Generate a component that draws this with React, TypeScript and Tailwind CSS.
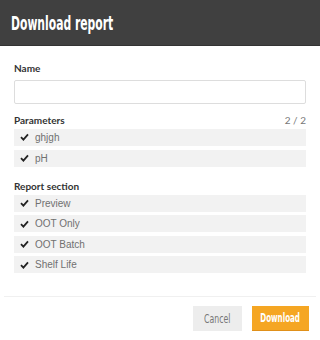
import { useState } from "react";

const parameters = ["ghjgh", "pH"];
const sections = ["Preview", "OOT Only", "OOT Batch", "Shelf Life"];

function CheckRow({ label }: { label: string }) {
  return (
    <div className="flex items-center h-[17px] bg-[#f2f2f2] pl-[6px]">
      <svg width="9" height="8" viewBox="0 0 9 8" className="mr-[6px]">
        <path d="M1 4.2 L3.4 6.6 L8 1.4" fill="none" stroke="#222" strokeWidth="1.8" />
      </svg>
      <span className="text-[10px] text-[#707070] font-['Liberation_Sans',Arial,sans-serif]">{label}</span>
    </div>
  );
}

export default function App() {
  const [name, setName] = useState("");

  return (
    <div className="w-[320px] h-[340px] bg-white flex flex-col font-['Lato',sans-serif]">
      {/* ヘッダー */}
      <div className="h-[46px] bg-[#404040] border-b border-[#333] flex items-center px-[11px]">
        <h1 className="whitespace-nowrap text-[20px] font-bold text-white font-['DejaVu_Sans_Condensed',sans-serif] scale-x-[0.6] origin-left">
          Download report
        </h1>
      </div>

      <div className="px-[14px] pt-[15px]">
        <label className="block text-[10px] font-bold text-[#333] mb-[2px]">Name</label>
        <input
          type="text"
          value={name}
          onChange={(e) => setName(e.target.value)}
          className="w-full h-[24px] border border-[#ddd] rounded-[2px] px-2 text-[11px] outline-none"
        />

        <div className="flex justify-between items-end mt-[9px] mb-[1px]">
          <span className="text-[10px] font-bold text-[#333]">Parameters</span>
          <span className="text-[10px] text-[#777]">2 / 2</span>
        </div>
        <div className="flex flex-col gap-[4px]">
          {parameters.map((p) => (
            <CheckRow key={p} label={p} />
          ))}
        </div>

        <div className="mt-[12px] mb-[1px] text-[10px] font-bold text-[#333]">Report section</div>
        <div className="flex flex-col gap-[3.5px]">
          {sections.map((s) => (
            <CheckRow key={s} label={s} />
          ))}
        </div>
      </div>

      <div className="mx-[4px] mt-[23px] border-t border-[#f0f0f0]" />

      <div className="flex justify-end gap-[10px] pr-[11px] pt-[9px]">
        <button className="w-[49px] h-[25px] bg-[#ededed] text-[#777] text-[12px] font-['DejaVu_Sans_Condensed',sans-serif] flex items-center justify-center">
          <span className="inline-block scale-x-[0.72]">Cancel</span>
        </button>
        <button className="w-[57px] h-[25px] bg-[#f5a623] border-b border-[#e0901a] text-white text-[12px] font-bold font-['DejaVu_Sans_Condensed',sans-serif] flex items-center justify-center">
          <span className="inline-block scale-x-[0.66]">Download</span>
        </button>
      </div>
    </div>
  );
}
